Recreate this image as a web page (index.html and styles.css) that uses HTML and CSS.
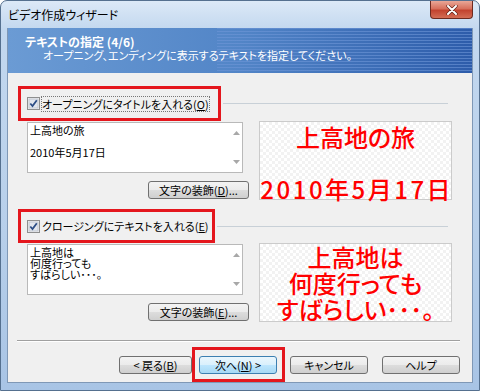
FILE: index.html
```html
<!DOCTYPE html>
<html lang="ja">
<head>
  <meta charset="UTF-8">
  <title>ビデオ作成ウィザード</title>
  <link rel="stylesheet" href="styles.css">
</head>
<body>
  <div class="window">
    <div class="titlebar">
      <span class="title">ビデオ作成ウィザード</span>
      <span class="close">
        <svg width="12" height="10" viewBox="0 0 12 10">
          <path d="M2 1 L10 9 M10 1 L2 9" stroke="#5a1d14" stroke-width="3.2" stroke-linecap="round"/>
          <path d="M2 1 L10 9 M10 1 L2 9" stroke="#ffffff" stroke-width="2" stroke-linecap="round"/>
        </svg>
      </span>
    </div>

    <div class="client">
      <div class="banner">
        <div class="banner-title">テキストの指定 (4/6)</div>
        <div class="banner-sub">オープニング、エンディングに表示するテキストを指定してください。</div>
      </div>

      <div class="page">
        <!-- opening -->
        <div class="opt">
          <div class="opt-head">
            <div class="opt-box">
              <span class="check">
                <svg width="13" height="13" viewBox="0 0 13 13">
                  <rect x="0.5" y="0.5" width="12" height="12" fill="#f4f4f4" stroke="#8e8f8f"/>
                  <rect x="2" y="2" width="9" height="9" fill="#e3e7ee" stroke="#c2c8d2"/>
                  <path d="M3.3 6.5 L5.5 9 L9.8 3.3" fill="none" stroke="#2e4f86" stroke-width="1.8"/>
                </svg>
              </span>
              <span class="opt-label focus">オープニングにタイトルを入れる(<u>O</u>)</span>
            </div>
            <div class="opt-rule"></div>
          </div>
          <div class="opt-body">
            <div class="opt-edit">
              <div class="textbox">
                <div class="textbox-text">上高地の旅<br><br>2010年5月17日</div>
                <div class="scroll">
                  <svg width="7" height="4" viewBox="0 0 7 4"><path d="M0 4 L3.5 0 L7 4 Z" fill="#a8a8a8"/></svg>
                  <svg width="7" height="4" viewBox="0 0 7 4"><path d="M0 0 L3.5 4 L7 0 Z" fill="#a8a8a8"/></svg>
                </div>
              </div>
              <button class="btn btn-deco">文字の装飾(<u>D</u>)...</button>
            </div>
            <div class="preview">上高地の旅<br><br><span class="date">2010年5月17日</span></div>
          </div>
        </div>

        <!-- closing -->
        <div class="opt">
          <div class="opt-head">
            <div class="opt-box opt-box-short">
              <span class="check">
                <svg width="13" height="13" viewBox="0 0 13 13">
                  <rect x="0.5" y="0.5" width="12" height="12" fill="#f4f4f4" stroke="#8e8f8f"/>
                  <rect x="2" y="2" width="9" height="9" fill="#e3e7ee" stroke="#c2c8d2"/>
                  <path d="M3.3 6.5 L5.5 9 L9.8 3.3" fill="none" stroke="#2e4f86" stroke-width="1.8"/>
                </svg>
              </span>
              <span class="opt-label">クロージングにテキストを入れる(<u>E</u>)</span>
            </div>
            <div class="opt-rule"></div>
          </div>
          <div class="opt-body">
            <div class="opt-edit">
              <div class="textbox">
                <div class="textbox-text">上高地は<br>何度行っても<br>すばらしい･･･。</div>
                <div class="scroll">
                  <svg width="7" height="4" viewBox="0 0 7 4"><path d="M0 4 L3.5 0 L7 4 Z" fill="#a8a8a8"/></svg>
                  <svg width="7" height="4" viewBox="0 0 7 4"><path d="M0 0 L3.5 4 L7 0 Z" fill="#a8a8a8"/></svg>
                </div>
              </div>
              <button class="btn btn-deco">文字の装飾(<u>E</u>)...</button>
            </div>
            <div class="preview preview-close">上高地は<br>何度行っても<br>すばらしい･･･。</div>
          </div>
        </div>
      </div>

      <div class="footer">
        <div class="footer-rule"></div>
        <div class="footer-buttons">
          <button class="btn btn-back">&lt; 戻る(<u>B</u>)</button>
          <span class="next-wrap"><button class="btn btn-next">次へ(<u>N</u>) &gt;</button></span>
          <button class="btn btn-cancel">キャンセル</button>
          <button class="btn btn-help">ヘルプ</button>
        </div>
      </div>
    </div>
  </div>
</body>
</html>
```

FILE: styles.css
```css
body {
  margin: 0;
  font-family: "Noto Sans CJK JP", "Noto Sans", sans-serif;
  font-feature-settings: "palt";
  font-size: 11px;
  color: #000;
}
.window {
  width: 480px;
  height: 391px;
  box-sizing: border-box;
  border: 1px solid #55708f;
  border-radius: 7px 7px 0 0;
  background: linear-gradient(#dce9f7, #c3d8ef 28px, #b7cfea 60%, #a8c4e5);
  padding: 0 6px 7px;
  display: flex;
  flex-direction: column;
  overflow: hidden;
}
.titlebar {
  height: 27px;
  display: flex;
  justify-content: space-between;
  align-items: flex-start;
}
.title {
  font-size: 12px;
  line-height: 27px;
  padding-left: 1px;
}
.close {
  width: 43px;
  height: 18px;
  box-sizing: border-box;
  border: 1px solid #6d2a20;
  border-top: 0;
  border-radius: 0 0 4px 4px;
  background: linear-gradient(#e9a797, #d7705c 45%, #c2432f 55%, #d36d55);
  display: flex;
  align-items: center;
  justify-content: center;
}
.client {
  flex: 1;
  background: #f0f0f0;
  border: 1px solid #7f98b6;
  border-top: 0;
  display: flex;
  flex-direction: column;
}
.banner {
  height: 45px;
  box-sizing: border-box;
  padding: 7px 0 0 17px;
  color: #fff;
  background:
    repeating-linear-gradient(to bottom, rgba(110, 150, 215, 0.6) 0 1px, transparent 1px 3px) right / 55% 100% no-repeat,
    linear-gradient(to right, #6b9bd4, #5285c7 50%, #2d5caa);
}
.banner-title {
  font-size: 12px;
  font-weight: bold;
  line-height: 14px;
}
.banner-sub {
  line-height: 12px;
  margin-left: 18px;
}
.page {
  padding: 13px 0 0 10px;
}
.opt + .opt {
  margin-top: 9px;
}
.opt-head {
  display: flex;
  align-items: center;
  height: 35px;
}
.opt + .opt .opt-head {
  height: 34px;
}
.opt-box {
  width: 203px;
  height: 100%;
  box-sizing: border-box;
  border: 3px solid #e4161d;
  padding-left: 6px;
  display: flex;
  align-items: center;
}
.opt-box-short {
  width: 197px;
}
.check {
  width: 13px;
  height: 13px;
  margin-right: 2px;
  display: flex;
}
.opt-label {
  font-size: 11px;
  line-height: 14px;
  white-space: nowrap;
}
.opt-label.focus {
  outline: 1px dotted #777;
}
.opt-rule {
  flex: 1;
  border-top: 1px solid #c8d0d7;
  margin: 0 24px 0 2px;
}
.opt-body {
  display: flex;
  padding-left: 9px;
  gap: 10px;
}
.opt-edit {
  width: 222px;
  display: flex;
  flex-direction: column;
}
.textbox {
  width: 216px;
  height: 51px;
  box-sizing: border-box;
  margin-top: 1px;
  border: 1px solid #b9b9b9;
  background: #fff;
  display: flex;
}
.textbox-text {
  flex: 1;
  padding: 2px 0 0 2px;
  line-height: 11px;
  white-space: nowrap;
}
.scroll {
  width: 11px;
  display: flex;
  flex-direction: column;
  justify-content: space-between;
  align-items: center;
  padding: 8px 0;
}
.btn {
  font: inherit;
  font-feature-settings: "palt";
  font-size: 11px;
  line-height: 16px;
  height: 18px;
  box-sizing: border-box;
  padding: 0;
  color: #000;
  border: 1px solid #707070;
  border-radius: 3px;
  background: linear-gradient(#f3f3f3, #ebebeb 50%, #dddddd 50%, #cfcfcf);
}
.btn-deco {
  align-self: flex-end;
  width: 101px;
  margin-top: 8px;
}
.preview {
  width: 193px;
  height: 79px;
  box-sizing: border-box;
  border: 1px solid #cbcbcb;
  background: repeating-conic-gradient(#f2f2f2 0 25%, #ffffff 0 50%) 0 0 / 6px 6px;
  color: #ff0000;
  font-size: 24px;
  font-weight: 500;
  line-height: 26px;
  padding-top: 2px;
  text-align: center;
  white-space: nowrap;
}
.preview-close {
  padding-top: 0;
}
.date {
  letter-spacing: 2.5px;
  margin-right: -2.5px;
}
.footer-rule {
  margin: 18px 12px 0 9px;
  border-top: 1px solid #a0a0a0;
  border-bottom: 1px solid #ffffff;
}
.footer-buttons {
  margin-top: 5px;
  padding-right: 12px;
  display: flex;
  justify-content: flex-end;
  align-items: center;
}
.btn-back {
  width: 73px;
}
.next-wrap {
  border: 3px solid #e4161d;
  padding: 6px 5px 5px 4px;
  display: flex;
}
.btn-next {
  width: 78px;
  border-color: #3c7fb1;
  background: linear-gradient(#eaf6fd, #d9f0fc 50%, #bee6fd 50%, #a7d9f5);
}
.btn-cancel {
  width: 78px;
  margin-left: 5px;
}
.btn-help {
  width: 78px;
  margin-left: 14px;
}
```
